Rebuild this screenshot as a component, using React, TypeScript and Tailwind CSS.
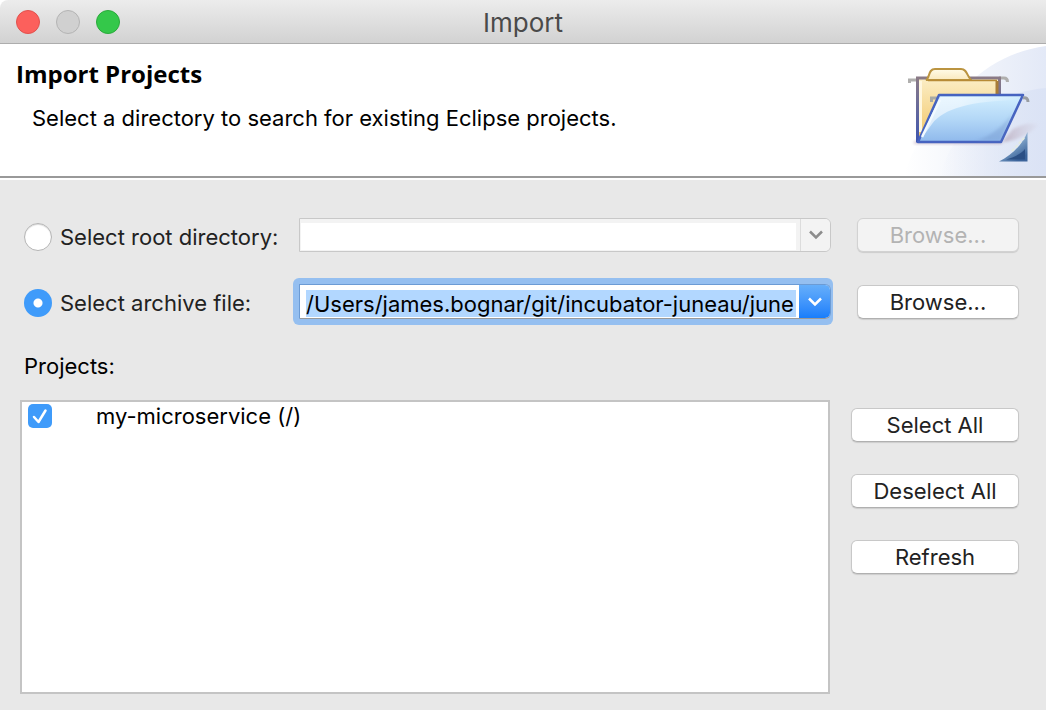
import React, { useState } from "react";

function Banner() {
  return (
    <svg className="h-[132px] w-[166px] shrink-0" viewBox="0 4 166 132" aria-hidden="true">
      <defs>
        <linearGradient id="arcA" x1="0" y1="0" x2="1" y2="0">
          <stop offset="0" stopColor="#e3e9f6" stopOpacity="0" />
          <stop offset="1" stopColor="#e3e9f7" />
        </linearGradient>
        <linearGradient id="arcB" x1="0" y1="0" x2="1" y2="0">
          <stop offset="0" stopColor="#dbe3f5" stopOpacity="0" />
          <stop offset="1" stopColor="#dbe3f5" />
        </linearGradient>
        <linearGradient id="back" x1="0" y1="0" x2="0" y2="1">
          <stop offset="0" stopColor="#fbeec6" />
          <stop offset="1" stopColor="#f2c463" />
        </linearGradient>
        <linearGradient id="backEdge" x1="0" y1="0" x2="0" y2="1">
          <stop offset="0" stopColor="#8a7a86" />
          <stop offset="1" stopColor="#3f56b0" />
        </linearGradient>
        <linearGradient id="tab" x1="0" y1="0" x2="0" y2="1">
          <stop offset="0" stopColor="#fffbe8" />
          <stop offset="1" stopColor="#fae9bd" />
        </linearGradient>
        <linearGradient id="front" x1="0" y1="0" x2="0" y2="1">
          <stop offset="0" stopColor="#d3efff" />
          <stop offset="0.5" stopColor="#b4d8f7" />
          <stop offset="1" stopColor="#8fb9ec" />
        </linearGradient>
        <linearGradient id="gloss" x1="0" y1="0" x2="1" y2="0">
          <stop offset="0" stopColor="#ffffff" stopOpacity="0.6" />
          <stop offset="0.4" stopColor="#ffffff" stopOpacity="0.55" />
          <stop offset="1" stopColor="#ffffff" stopOpacity="0" />
        </linearGradient>
        <linearGradient id="wedge" x1="0" y1="0" x2="0.6" y2="1">
          <stop offset="0" stopColor="#d5e3ee" />
          <stop offset="0.55" stopColor="#7fa3c8" />
          <stop offset="1" stopColor="#3b639a" />
        </linearGradient>
        <linearGradient id="shade" x1="0" y1="0" x2="1" y2="0">
          <stop offset="0" stopColor="#a992a6" stopOpacity="0.6" />
          <stop offset="1" stopColor="#c9bccb" stopOpacity="0.1" />
        </linearGradient>
        <filter id="soft" x="-20%" y="-50%" width="140%" height="200%">
          <feGaussianBlur stdDeviation="1.5" />
        </filter>
      </defs>
      <path d="M86 46C108 24 136 10 166 6V136H24C36 96 62 66 86 46Z" fill="url(#arcA)" />
      <path d="M60 136C76 80 118 52 166 48V136Z" fill="url(#arcB)" />
      <path d="M122 102L133 89C143 84 152 82 158 85C152 93 136 101 122 102Z" fill="url(#shade)" filter="url(#soft)" />
      <rect x="34" y="101" width="88" height="3" fill="#b9a3b8" fillOpacity="0.6" filter="url(#soft)" />
      <path d="M29.500 43V40H37M119 38H124Q127.500 38 127.500 42" fill="none" stroke="#b0afae" strokeWidth="3" />
      <path d="M37.500 38H119.500V70L100 101H37.500Z" fill="url(#back)" stroke="url(#backEdge)" strokeWidth="3" />
      <path d="M40.500 41V92" stroke="#fff7df" strokeWidth="3" />
      <path d="M117 41V54" stroke="#a87c38" strokeWidth="3" />
      <path d="M46 40C50 38 48 29 55 29H81C87 29 87 36 91 40Z" fill="url(#tab)" stroke="#bb9440" strokeWidth="2" />
      <path d="M48 40.500H117" stroke="#b78b35" strokeWidth="1.500" />
      <path d="M51.500 62V58H58" fill="none" stroke="#a8aaa4" strokeWidth="3" />
      <path d="M59 55H143L121 102H38Z" fill="url(#front)" stroke="#4663c0" strokeWidth="2.500" strokeLinejoin="round" />
      <path d="M60.500 57H141L139 60C92 61 64 68 52 84L41 99Z" fill="url(#gloss)" />
      <path d="M42 97L60 60" stroke="#f2faff" strokeWidth="2.500" />
      <path d="M120.500 100.500H96C112 96 124 85 133 73Z" fill="#6c8fc5" fillOpacity="0.35" filter="url(#soft)" />
      <path d="M143 58Q148 57 148 62" fill="none" stroke="#999da2" strokeWidth="3" />
      <path d="M147.500 92V121.500H119C132 115 142 105 147.500 92Z" fill="url(#wedge)" />
      <path d="M145 109V119.500H126C134 117 141 114 145 109Z" fill="#2b4f84" />
      <path d="M132 111L145 97" stroke="#e4ebe0" strokeWidth="2" strokeDasharray="3 2" />
    </svg>
  );
}

function Chevron({ className }: { className: string }) {
  return (
    <svg className={className} width="14" height="10" viewBox="0 0 14 10" fill="none" aria-hidden="true">
      <path d="M1 1.500L7 7.500L13 1.500" stroke="currentColor" strokeWidth="2.500" />
    </svg>
  );
}

function PushButton({ children, disabled = false }: { children: React.ReactNode; disabled?: boolean }) {
  return (
    <button
      type="button"
      disabled={disabled}
      className="h-[34px] w-full rounded-md border border-[#c8c8c8] border-b-[#b0b0b0] bg-white leading-8 text-[#222] shadow-[0_1px_1px_rgba(0,0,0,0.12)] disabled:border-[#d2d2d2] disabled:bg-[#f3f3f3] disabled:text-[#b3b3b3]"
    >
      {children}
    </button>
  );
}

type SourceRowProps = {
  id: string;
  label: string;
  value: string;
  active: boolean;
  onSelect: () => void;
  onChange: (value: string) => void;
};

function SourceRow({ id, label, value, active, onSelect, onChange }: SourceRowProps) {
  return (
    <>
      <label className="flex items-center gap-2 pt-[3px] whitespace-nowrap text-[#222]">
        <input
          type="radio"
          name="source"
          checked={active}
          onChange={onSelect}
          className="size-7 appearance-none rounded-full border border-[#b5b5b5] bg-white shadow-[inset_0_1px_1px_rgba(0,0,0,0.15)] checked:border-0 checked:bg-[radial-gradient(circle,#fff_4px,#3f9bfa_5px)] checked:shadow-none"
        />
        {label}
      </label>
      <div className={active ? "rounded-md bg-[#95bff0] py-1.5 pr-0.5 pl-1.5" : "py-1.5 pr-0.5 pl-1.5"}>
        <div
          className={
            active
              ? "flex h-[35px] overflow-hidden rounded-r-md border border-[#6c9bd4] border-b-[#999] bg-white"
              : "flex h-[34px] overflow-hidden rounded-r-md border border-[#c8c8c8] bg-[#f3f3f3]"
          }
        >
          <div className={active ? "min-w-0 flex-1 pt-[5px] pr-[3px] pb-px pl-1.5" : "min-w-0 flex-1 pt-1 pr-1 pb-px pl-px"}>
            <input
              id={id}
              type="text"
              aria-label={label}
              value={value}
              onChange={(e) => onChange(e.target.value)}
              className={
                active
                  ? "block h-full w-full bg-[#b2d7ff] pt-px text-black outline-none"
                  : "block h-full w-full bg-white pt-px text-black outline-none"
              }
            />
          </div>
          <button
            type="button"
            aria-label={"Recent entries for " + label}
            className={
              active
                ? "-my-px -mr-px flex w-8 items-center justify-center bg-linear-to-b from-[#68b0fa] to-[#147cfb] text-white"
                : "flex w-[30px] items-center justify-center border-l border-[#dcdcdc] bg-[#f3f3f3] text-[#8c8c8c]"
            }
          >
            <Chevron className="shrink-0" />
          </button>
        </div>
      </div>
    </>
  );
}

export default function App() {
  const [source, setSource] = useState("archive");
  const [root, setRoot] = useState("");
  const [archive, setArchive] = useState("/Users/james.bognar/git/incubator-juneau/june");
  const [checked, setChecked] = useState(true);

  return (
    <div className="flex min-h-screen flex-col bg-[#e8e8e8] font-[Inter,sans-serif] text-[22px] leading-7 text-black">
      <div className="bg-white">
        <div className="relative flex h-11 items-center justify-center rounded-tl-lg border-b border-[#adadad] bg-linear-to-b from-[#ececec] to-[#d2d2d2]">
          <div className="absolute left-4 flex gap-4">
            <button type="button" aria-label="Close" className="size-6 rounded-full border border-[#e2514d] bg-[#fc605c]" />
            <button type="button" aria-label="Minimize" disabled className="size-6 rounded-full border border-[#b4b4b4] bg-[#d0d0d0]" />
            <button type="button" aria-label="Zoom" className="size-6 rounded-full border border-[#2aaa3b] bg-[#34c84a]" />
          </div>
          <h1 className="pt-0.5 text-[26px] text-[#4a4a4a]">Import</h1>
        </div>
      </div>

      <header className="flex shrink-0 justify-between border-b-2 border-[#999] bg-white">
        <div className="pt-4 pl-4">
          <h2 className="font-[Open_Sans,sans-serif] text-[24px] font-bold">Import Projects</h2>
          <p className="mt-4 pl-4">Select a directory to search for existing Eclipse projects.</p>
        </div>
        <Banner />
      </header>

      <main className="flex flex-1 flex-col border-t-2 border-white pt-8 pr-[27px] pb-4 pl-5">
        <div className="grid grid-cols-[269px_1fr_24px_162px] items-center gap-y-5 pl-1">
          <SourceRow id="root" label="Select root directory:" value={root} active={source === "root"} onSelect={() => setSource("root")} onChange={setRoot} />
          <div className="col-start-4">
            <PushButton disabled>Browse...</PushButton>
          </div>
          <SourceRow id="archive" label="Select archive file:" value={archive} active={source === "archive"} onSelect={() => setSource("archive")} onChange={setArchive} />
          <div className="col-start-4">
            <PushButton>Browse...</PushButton>
          </div>
        </div>

        <h3 className="mt-[27px] pl-1">Projects:</h3>

        <div className="mt-5 flex flex-1 gap-[21px]">
          <ul className="flex-1 border-2 border-[#c4c4c4] bg-white px-1.5">
            <li>
              <label className="flex items-center gap-11">
                <span className="grid size-6 shrink-0">
                  <input
                    type="checkbox"
                    checked={checked}
                    onChange={(e) => setChecked(e.target.checked)}
                    className="peer col-start-1 row-start-1 size-6 appearance-none rounded-[5px] border border-[#b5b5b5] bg-white checked:border-0 checked:bg-[#3f9bfa]"
                  />
                  <svg className="pointer-events-none invisible col-start-1 row-start-1 peer-checked:visible" viewBox="0 0 24 24" fill="none" aria-hidden="true">
                    <path d="M6 13L10.500 18L17.500 6.500" stroke="#fff" strokeWidth="2.500" strokeLinecap="round" strokeLinejoin="round" />
                  </svg>
                </span>
                my-microservice (/)
              </label>
            </li>
          </ul>
          <div className="flex w-[168px] flex-col gap-8 pt-2">
            <PushButton>Select All</PushButton>
            <PushButton>Deselect All</PushButton>
            <PushButton>Refresh</PushButton>
          </div>
        </div>
      </main>
    </div>
  );
}
